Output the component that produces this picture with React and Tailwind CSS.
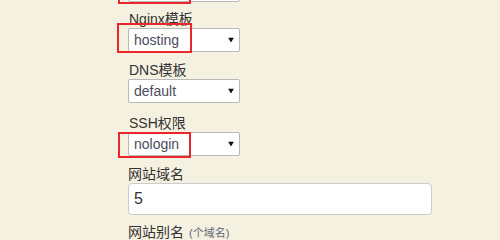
const font = { fontFamily: '"Liberation Sans", Arial, "Noto Sans CJK SC", sans-serif' };

function Caret() {
  return (
    <svg width="6" height="5" viewBox="0 0 6 5" className="absolute right-[5px] top-1/2 -translate-y-1/2">
      <path d="M0 0h6L3 5z" fill="#111" />
    </svg>
  );
}

function FakeSelect({ value, className = '' }) {
  return (
    <div className={`relative w-[112px] h-[24px] bg-white border border-[#b9b9b9] rounded-[2px] pl-[5px] flex items-center text-[14px] text-[#4a4d5c] ${className}`}>
      <span>{value}</span>
      <Caret />
    </div>
  );
}

function Mark({ className }) {
  return <div className={`absolute border-2 border-[#e8262c] pointer-events-none ${className}`} />;
}

export default function App() {
  return (
    <div className="w-[500px] h-[240px] overflow-hidden bg-[#f5f1e1]" style={font}>
      <div className="pl-[128px] relative">
        {/* previous select, only its bottom edge is visible */}
        <div className="relative mt-[-22px]">
          <FakeSelect value="" />
          <Mark className="left-[-10px] top-0 w-[73px] h-[26px]" />
        </div>

        <div className="mt-[8px] h-[18px] leading-[18px] pl-[1px] text-[14px] text-[#333]">Nginx模板</div>
        <div className="relative">
          <FakeSelect value="hosting" />
          <Mark className="left-[-11px] top-[-5px] w-[75px] h-[30px]" />
        </div>

        <div className="mt-[9px] h-[18px] leading-[18px] pl-[1px] text-[14px] text-[#333]">DNS模板</div>
        <FakeSelect value="default" />

        <div className="mt-[11px] h-[18px] leading-[18px] pl-[1px] text-[14px] text-[#333]">SSH权限</div>
        <div className="relative">
          <FakeSelect value="nologin" className="h-[23px]" />
          <Mark className="left-[-10px] top-0 w-[73px] h-[26px]" />
        </div>

        <div className="mt-[9px] h-[18px] leading-[18px] text-[14px] text-[#333]">网站域名</div>
        <div className="w-[304px] h-[32px] bg-white border border-[#cccccc] rounded-[4px] pl-[5px] flex items-center text-[16px] text-[#333]">
          5
        </div>

        <div className="mt-[8px] h-[18px] leading-[18px] text-[14px] text-[#333] flex items-baseline">
          <span>网站别名</span>
          <span className="ml-[5px] text-[11px] text-[#5f6475]">(个域名)</span>
        </div>
      </div>
    </div>
  );
}
